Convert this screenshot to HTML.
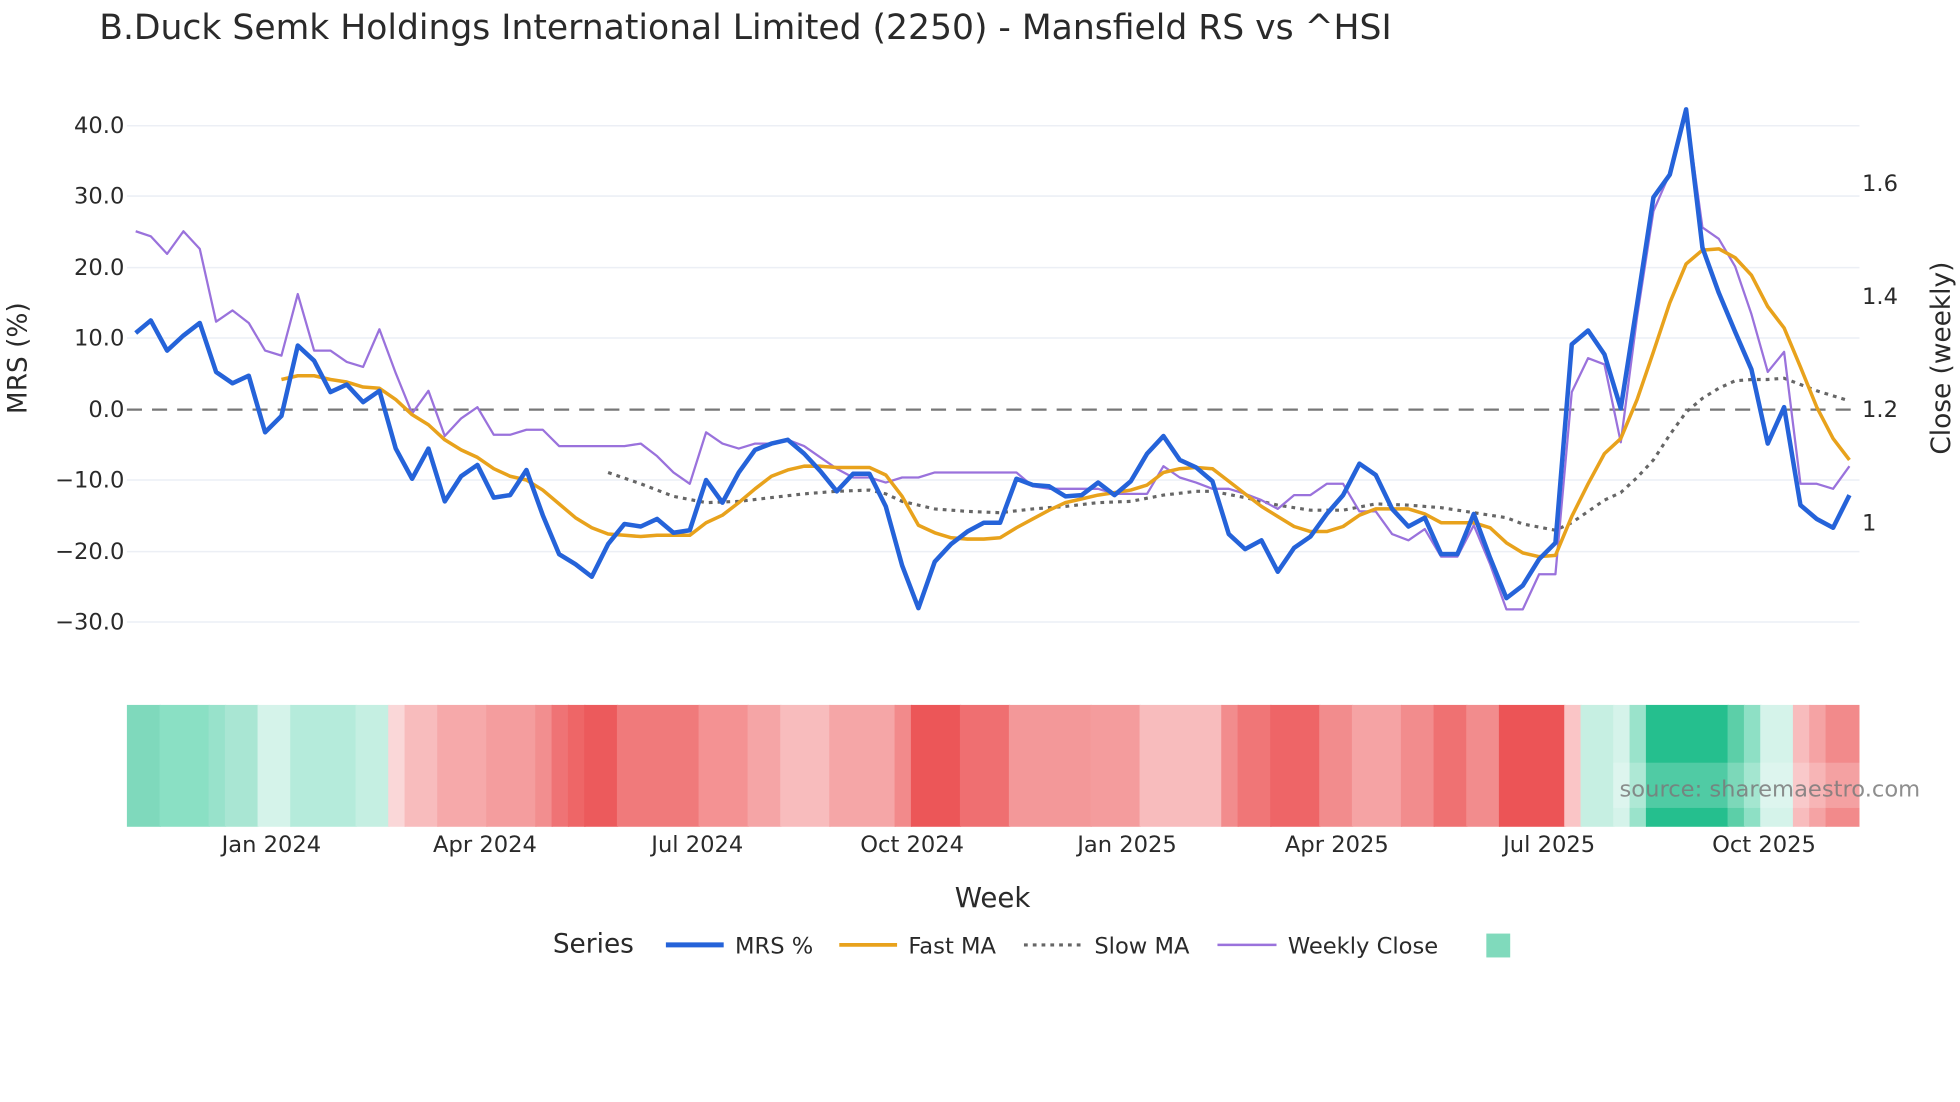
<!DOCTYPE html>
<html><head><meta charset="utf-8"><style>
html,body{margin:0;padding:0;background:#fff;overflow:hidden}
svg{display:block}
text{font-family:"DejaVu Sans","Liberation Sans",sans-serif;fill:#2a2a2a}
</style></head><body>
<svg width="1960" height="1102" viewBox="0 0 1560 877" xmlns="http://www.w3.org/2000/svg">
<rect width="1560" height="877" fill="#fff"/>
<text x="79" y="31" font-size="27.5">B.Duck Semk Holdings International Limited (2250) - Mansfield RS vs ^HSI</text>
<g stroke="#eceff5" stroke-width="1.2">
<line x1="101" x2="1480" y1="100" y2="100"/><line x1="101" x2="1480" y1="156" y2="156"/>
<line x1="101" x2="1480" y1="213" y2="213"/><line x1="101" x2="1480" y1="269" y2="269"/>
<line x1="101" x2="1480" y1="382" y2="382"/><line x1="101" x2="1480" y1="439" y2="439"/>
<line x1="101" x2="1480" y1="495" y2="495"/>
</g>
<line x1="101" x2="1480" y1="326" y2="326" stroke="#777" stroke-width="1.8" stroke-dasharray="12,8"/>
<g font-size="18" text-anchor="end">
<text x="99" y="106">40.0</text><text x="99" y="162">30.0</text><text x="99" y="219">20.0</text>
<text x="99" y="275">10.0</text><text x="99" y="332">0.0</text><text x="99" y="388">−10.0</text>
<text x="99" y="445">−20.0</text><text x="99" y="501">−30.0</text>
</g>
<g font-size="18">
<text x="1482" y="152">1.6</text><text x="1482" y="242">1.4</text><text x="1482" y="332">1.2</text><text x="1482" y="422">1</text>
</g>
<text transform="translate(21,285) rotate(-90)" font-size="21" text-anchor="middle">MRS (%)</text>
<text transform="translate(1552,285) rotate(-90)" font-size="21" text-anchor="middle">Close (weekly)</text>

<polyline fill="none" stroke="#666" stroke-width="2.5" stroke-dasharray="3,4" points="484,376 510,385 536,395 562,400 588,399 614,396 640,393 666,391 692,390 705,393 718,399 744,405 770,407 796,408 822,405 848,403 874,400 900,399 926,394 952,391 965,391 991,396 1017,402 1043,406 1069,406 1095,401 1121,402 1147,404 1173,408 1199,412 1212,417 1238,422 1251,416 1277,398 1290,392 1303,380 1316,366 1329,346 1342,328 1355,317 1368,309 1381,303 1394,302 1407,302 1420,301 1433,306 1446,311 1459,315 1472,319"/>

<polyline fill="none" stroke="#9a72dc" stroke-width="1.8" stroke-linejoin="round" points="108,184 120,188 133,202 146,184 159,198 172,256 185,247 198,257 211,279 224,283 237,234 250,279 263,279 276,288 289,292 302,262 315,297 328,329 341,311 354,347 367,333 380,324 393,346 406,346 419,342 432,342 445,355 458,355 471,355 484,355 497,355 510,353 523,363 536,376 549,385 562,344 575,353 588,357 601,353 614,353 627,350 640,355 653,364 666,373 679,380 692,380 705,384 718,380 731,380 744,376 757,376 770,376 783,376 796,376 809,376 822,387 835,389 848,389 861,389 874,389 887,393 900,393 913,393 926,371 939,380 952,384 965,389 978,389 991,393 1004,398 1017,405 1030,394 1043,394 1056,385 1069,385 1082,407 1095,407 1108,425 1121,430 1134,421 1147,443 1160,443 1173,418 1186,449 1199,485 1212,485 1225,457 1238,457 1251,312 1264,285 1277,290 1290,352 1303,252 1316,168 1329,138 1342,87 1355,181 1368,190 1381,212 1394,250 1407,296 1420,280 1433,385 1446,385 1459,389 1472,371"/>

<polyline fill="none" stroke="#e8a21c" stroke-width="2.8" stroke-linejoin="round" points="224,302 237,299 250,299 263,302 276,304 289,308 302,309 315,318 328,330 341,338 354,350 367,358 380,364 393,373 406,379 419,382 432,390 445,401 458,412 471,420 484,425 497,426 510,427 523,426 536,426 549,426 562,416 575,410 588,400 601,389 614,379 627,374 640,371 653,371 666,372 679,372 692,372 705,378 718,395 731,418 744,424 757,428 770,429 783,429 796,428 809,420 822,413 835,406 848,400 861,397 874,394 887,392 900,390 913,386 926,376 939,373 952,372 965,373 978,383 991,393 1004,403 1017,411 1030,419 1043,423 1056,423 1069,419 1082,410 1095,405 1108,405 1121,405 1134,409 1147,416 1160,416 1173,416 1186,420 1199,432 1212,440 1225,443 1238,442 1251,411 1264,385 1277,361 1290,349 1303,318 1316,280 1329,241 1342,210 1355,199 1368,198 1381,205 1394,219 1407,244 1420,261 1433,292 1446,324 1459,349 1472,366"/>

<polyline fill="none" stroke="#2563d9" stroke-width="3.6" stroke-linejoin="round" points="108,265 120,255 133,279 146,267 159,257 172,296 185,305 198,299 211,344 224,331 237,275 250,287 263,312 276,306 289,320 302,311 315,357 328,381 341,357 354,399 367,379 380,370 393,396 406,394 419,374 432,410 445,441 458,449 471,459 484,433 497,417 510,419 523,413 536,424 549,422 562,382 575,400 588,376 601,358 614,353 627,350 640,361 653,375 666,391 679,377 692,377 705,403 718,450 731,484 744,447 757,433 770,423 783,416 796,416 809,381 822,386 835,387 848,395 861,394 874,384 887,394 900,383 913,361 926,347 939,366 952,372 965,383 978,425 991,437 1004,430 1017,455 1030,436 1043,427 1056,409 1069,394 1082,369 1095,378 1108,405 1121,419 1134,412 1147,441 1160,441 1173,409 1186,444 1199,476 1212,466 1225,445 1238,432 1251,274 1264,263 1277,282 1290,325 1303,242 1316,157 1329,139 1342,87 1355,197 1368,233 1381,264 1394,294 1407,353 1420,324 1433,402 1446,413 1459,420 1472,394"/>

<g>
<rect x="101" y="561" width="27" height="97" fill="#7fd9bc"/>
<rect x="127" y="561" width="40" height="97" fill="#8ae0c4"/>
<rect x="166" y="561" width="14" height="97" fill="#98e2cb"/>
<rect x="179" y="561" width="27" height="97" fill="#a9e6d3"/>
<rect x="205" y="561" width="27" height="97" fill="#d5f3ea"/>
<rect x="231" y="561" width="53" height="97" fill="#b5ebdb"/>
<rect x="283" y="561" width="27" height="97" fill="#c5efe2"/>
<rect x="309" y="561" width="14" height="97" fill="#fad7d8"/>
<rect x="322" y="561" width="27" height="97" fill="#f8bcbd"/>
<rect x="348" y="561" width="40" height="97" fill="#f6a9aa"/>
<rect x="387" y="561" width="40" height="97" fill="#f49d9e"/>
<rect x="426" y="561" width="14" height="97" fill="#f28e8f"/>
<rect x="439" y="561" width="14" height="97" fill="#ef7375"/>
<rect x="452" y="561" width="14" height="97" fill="#ee6667"/>
<rect x="465" y="561" width="27" height="97" fill="#ec5a5c"/>
<rect x="491" y="561" width="66" height="97" fill="#f07a7b"/>
<rect x="556" y="561" width="40" height="97" fill="#f49293"/>
<rect x="595" y="561" width="27" height="97" fill="#f5a5a6"/>
<rect x="621" y="561" width="40" height="97" fill="#f8bcbd"/>
<rect x="660" y="561" width="53" height="97" fill="#f5a6a7"/>
<rect x="712" y="561" width="14" height="97" fill="#f28a8b"/>
<rect x="725" y="561" width="40" height="97" fill="#ec5658"/>
<rect x="764" y="561" width="40" height="97" fill="#ef6f71"/>
<rect x="803" y="561" width="66" height="97" fill="#f39899"/>
<rect x="868" y="561" width="40" height="97" fill="#f49c9d"/>
<rect x="907" y="561" width="66" height="97" fill="#f8bcbd"/>
<rect x="972" y="561" width="14" height="97" fill="#f28c8d"/>
<rect x="985" y="561" width="27" height="97" fill="#f07677"/>
<rect x="1011" y="561" width="40" height="97" fill="#ee6567"/>
<rect x="1050" y="561" width="27" height="97" fill="#f28c8d"/>
<rect x="1076" y="561" width="40" height="97" fill="#f5a3a4"/>
<rect x="1115" y="561" width="27" height="97" fill="#f28c8d"/>
<rect x="1141" y="561" width="27" height="97" fill="#ef7172"/>
<rect x="1167" y="561" width="27" height="97" fill="#f28c8d"/>
<rect x="1193" y="561" width="53" height="97" fill="#ec5456"/>
<rect x="1245" y="561" width="14" height="97" fill="#fac5c6"/>
<rect x="1258" y="561" width="27" height="97" fill="#c6efe2"/>
<rect x="1284" y="561" width="14" height="97" fill="#d5f3ea"/>
<rect x="1297" y="561" width="14" height="97" fill="#9ae3cb"/>
<rect x="1310" y="561" width="66" height="97" fill="#25bf8e"/>
<rect x="1375" y="561" width="14" height="97" fill="#5ccfa8"/>
<rect x="1388" y="561" width="14" height="97" fill="#8ee0c5"/>
<rect x="1401" y="561" width="27" height="97" fill="#d5f3ea"/>
<rect x="1427" y="561" width="14" height="97" fill="#f8bcbd"/>
<rect x="1440" y="561" width="14" height="97" fill="#f5a3a4"/>
<rect x="1453" y="561" width="27" height="97" fill="#f28a8b"/>
</g>
<rect x="1284" y="607" width="196" height="36" fill="#fff" fill-opacity="0.2"/>
<text x="1289" y="634" font-size="18" style="fill:#7a7a7a;fill-opacity:0.85">source: sharemaestro.com</text>

<g font-size="18" text-anchor="middle">
<text x="216" y="678">Jan 2024</text><text x="386" y="678">Apr 2024</text><text x="555" y="678">Jul 2024</text>
<text x="726" y="678">Oct 2024</text><text x="897" y="678">Jan 2025</text><text x="1064" y="678">Apr 2025</text>
<text x="1233" y="678">Jul 2025</text><text x="1404" y="678">Oct 2025</text>
</g>
<text x="790" y="722" font-size="22" text-anchor="middle">Week</text>

<text x="440" y="758" font-size="21">Series</text>
<line x1="530" x2="576" y1="752" y2="752" stroke="#2563d9" stroke-width="4"/>
<text x="585" y="759" font-size="18">MRS %</text>
<line x1="668" x2="714" y1="752" y2="752" stroke="#e8a21c" stroke-width="3"/>
<text x="723" y="759" font-size="18">Fast MA</text>
<line x1="815" x2="861" y1="752" y2="752" stroke="#666" stroke-width="2.5" stroke-dasharray="3,4"/>
<text x="871" y="759" font-size="18">Slow MA</text>
<line x1="969" x2="1016" y1="752" y2="752" stroke="#9a72dc" stroke-width="2"/>
<text x="1025" y="759" font-size="18">Weekly Close</text>
<rect x="1183" y="743" width="19" height="19" fill="#80dabc"/>
</svg>
</body></html>
